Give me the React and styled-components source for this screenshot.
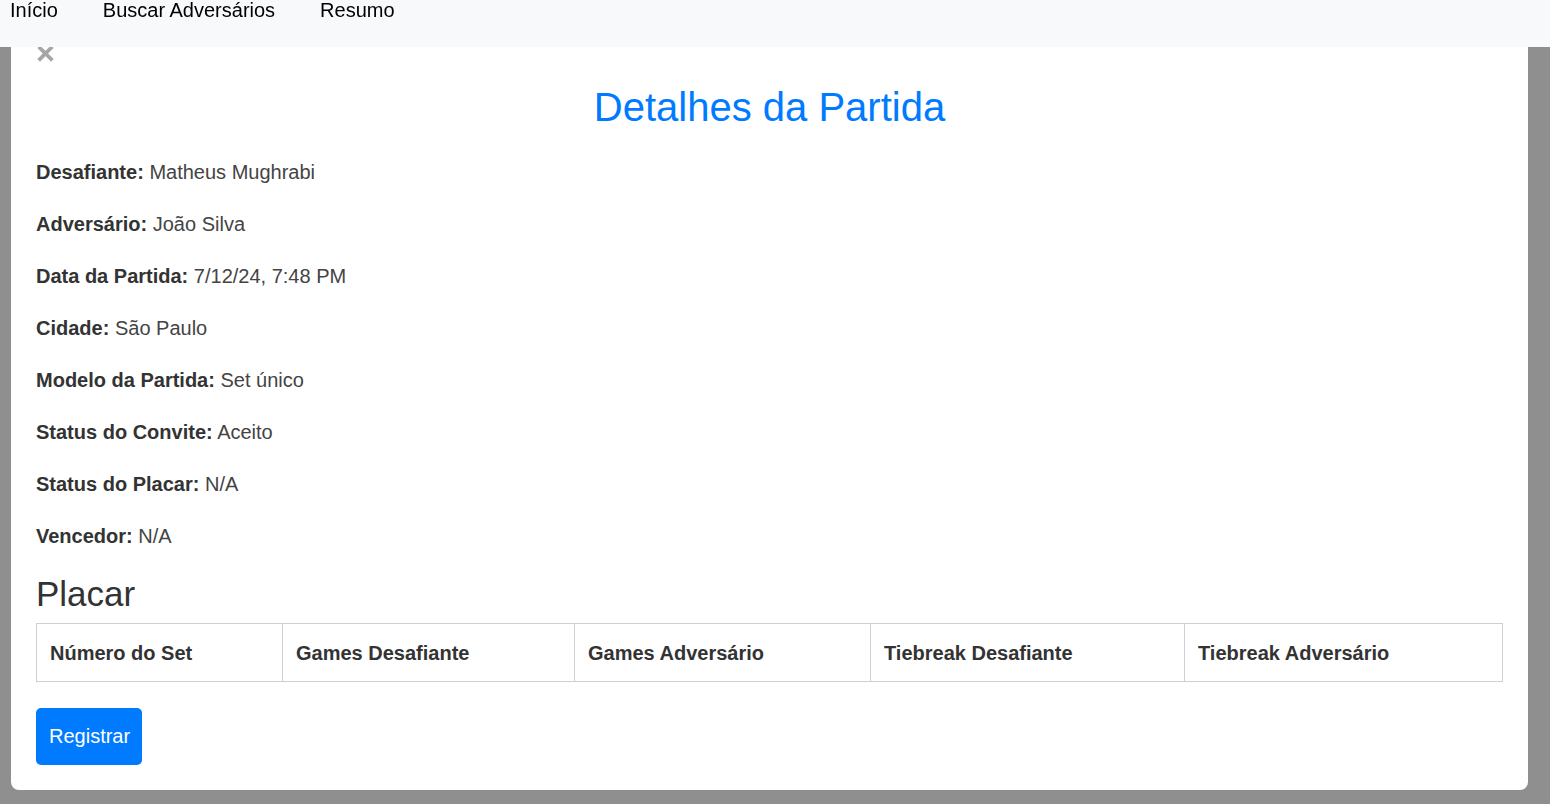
import React from 'react';
import styled, { createGlobalStyle } from 'styled-components';

const details = [
  ['Desafiante', 'Matheus Mughrabi'],
  ['Adversário', 'João Silva'],
  ['Data da Partida', '7/12/24, 7:48 PM'],
  ['Cidade', 'São Paulo'],
  ['Modelo da Partida', 'Set único'],
  ['Status do Convite', 'Aceito'],
  ['Status do Placar', 'N/A'],
  ['Vencedor', 'N/A'],
];

const columns = [
  ['Número do Set', 246],
  ['Games Desafiante', 292],
  ['Games Adversário', 296],
  ['Tiebreak Desafiante', 314],
  ['Tiebreak Adversário', 318],
];

function App() {
  return (
    <>
      <GlobalStyle />
      <Navbar>
        <NavLink href='#'>Início</NavLink>
        <NavLink href='#'>Buscar Adversários</NavLink>
        <NavLink href='#'>Resumo</NavLink>
      </Navbar>
      <Overlay>
        <Modal>
          <CloseButton aria-label='Fechar'>
            <svg width='17' height='17' viewBox='0 0 17 17'>
              <path d='M3 3 L14 14 M14 3 L3 14' stroke='#a6a6a6' strokeWidth='3.8' strokeLinecap='square' />
            </svg>
          </CloseButton>
          <Title>Detalhes da Partida</Title>
          {details.map(([label, value]) => (
            <Info key={label}>
              <strong>{label}:</strong> {value}
            </Info>
          ))}
          <SubTitle>Placar</SubTitle>
          <ScoreTable>
            <thead>
              <tr>
                {columns.map(([name, width]) => (
                  <Th key={name} $width={width}>
                    {name}
                  </Th>
                ))}
              </tr>
            </thead>
          </ScoreTable>
          <Button>Registrar</Button>
        </Modal>
      </Overlay>
    </>
  );
}

export default App;

const GlobalStyle = createGlobalStyle`
  html, body {
    margin: 0;
    padding: 0;
    background: #8f8f8f;
    font-family: 'Liberation Sans', Arial, sans-serif;
  }
  * {
    box-sizing: border-box;
  }
`;

const Navbar = styled.nav`
  position: fixed;
  top: 0;
  left: 0;
  right: 0;
  height: 47px;
  background: #f8f9fa;
  display: flex;
  align-items: flex-start;
  gap: 45px;
  padding: 0 10px;
  z-index: 10;
`;

const NavLink = styled.a`
  font-size: 20px;
  line-height: 20px;
  color: #000;
  text-decoration: none;
`;

const Overlay = styled.div`
  min-height: 100vh;
  background: #8f8f8f;
  padding: 0 22px 14px 11px;
`;

const Modal = styled.div`
  background: #fff;
  width: 1517px;
  border-radius: 0 0 8px 8px;
  padding: 45px 25px 25px;
  color: #333;
`;

const CloseButton = styled.button`
  display: block;
  width: 17px;
  height: 17px;
  margin-left: 1px;
  padding: 0;
  border: none;
  background: none;
  cursor: pointer;
  svg {
    display: block;
  }
`;

const Title = styled.h2`
  margin: 21px 0 26px;
  text-align: center;
  color: #007bff;
  font-size: 40px;
  line-height: 48px;
  font-weight: 400;
`;

const Info = styled.p`
  margin: 0 0 22px;
  font-size: 20px;
  line-height: 30px;
  color: #444;
  strong {
    color: #333;
    font-weight: 700;
  }
`;

const SubTitle = styled.h3`
  margin: 0 0 8px;
  font-size: 35px;
  line-height: 42px;
  font-weight: 400;
  color: #333;
`;

const ScoreTable = styled.table`
  width: 1466px;
  border-collapse: collapse;
  table-layout: fixed;
  margin-bottom: 26px;
`;

const Th = styled.th`
  width: ${props => props.$width}px;
  border: 1px solid #d0d0d0;
  padding: 14px 13px 13px;
  text-align: left;
  font-size: 20px;
  line-height: 30px;
  font-weight: 700;
  color: #333;
`;

const Button = styled.button`
  display: block;
  background: #007bff;
  color: #fff;
  border: none;
  border-radius: 5px;
  padding: 13px 12px 13px 13px;
  font-family: inherit;
  font-size: 20px;
  line-height: 31px;
  cursor: pointer;
`;
